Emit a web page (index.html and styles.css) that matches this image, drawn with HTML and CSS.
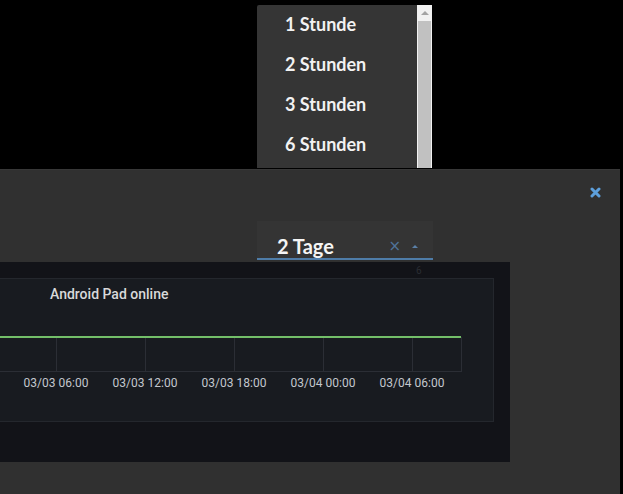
FILE: index.html
```html
<!DOCTYPE html>
<html lang="de">
  <head>
    <meta charset="UTF-8" />
    <meta name="viewport" content="width=device-width, initial-scale=1.0" />
    <title>Android Pad online</title>
    <link rel="stylesheet" href="styles.css">
  </head>
  <body>
    <ul class="dropdown">
      <li>1 Stunde</li>
      <li>2 Stunden</li>
      <li>3 Stunden</li>
      <li>6 Stunden</li>
      <li class="scrollbar"><i class="arrow"></i><i class="thumb"></i></li>
    </ul>

    <section class="dialog">
      <header>
        <button class="close" title="Schließen">
          <svg width="11" height="11" viewBox="0 0 11 11">
            <path d="M2 2 L9 9 M9 2 L2 9" stroke="#5d9fdb" stroke-width="3" stroke-linecap="round" />
          </svg>
        </button>
      </header>

      <div class="select">
        <span class="value">2 Tage</span>
        <span class="clear">×</span>
        <span class="caret"></span>
      </div>

      <div class="charts">
        <div class="hint">6</div>
        <div class="panel">
          <h3>Android Pad online</h3>
          <svg class="plot" width="494" height="110" viewBox="0 0 494 110">
            <g stroke="#2b2e35" stroke-width="1">
              <line x1="0" y1="26.5" x2="461.5" y2="26.5" />
              <line x1="0" y1="60.5" x2="461.5" y2="60.5" />
              <line x1="56.5" y1="26" x2="56.5" y2="61" />
              <line x1="145.5" y1="26" x2="145.5" y2="61" />
              <line x1="234.5" y1="26" x2="234.5" y2="61" />
              <line x1="323.5" y1="26" x2="323.5" y2="61" />
              <line x1="412.5" y1="26" x2="412.5" y2="61" />
              <line x1="461.5" y1="26" x2="461.5" y2="61" />
            </g>
            <line x1="0" y1="26" x2="461" y2="26" stroke="#73bf69" stroke-width="2" />
            <g class="ticks" text-anchor="middle">
              <text x="56" y="76">03/03 06:00</text>
              <text x="145" y="76">03/03 12:00</text>
              <text x="234" y="76">03/03 18:00</text>
              <text x="323" y="76">03/04 00:00</text>
              <text x="412" y="76">03/04 06:00</text>
            </g>
          </svg>
        </div>
      </div>
    </section>
  </body>
</html>
```

FILE: styles.css
```css
body {
  margin: 0;
  background: #000;
  font-family: Lato, "Open Sans", sans-serif;
  height: 100vh;
  overflow: hidden;
}

.dropdown {
  position: absolute;
  top: 5px;
  left: 257px;
  width: 175px;
  height: 163px;
  margin: 0;
  padding: 0;
  list-style: none;
  background: #353535;
  border-radius: 2px 0 0 0;
  overflow: hidden;

  li {
    height: 40px;
    line-height: 38px;
    padding-left: 28px;
    color: #f2f2f2;
    font-size: 18px;
    font-weight: 700;
  }

  .scrollbar {
    position: absolute;
    top: 0;
    right: 0;
    width: 15px;
    height: 100%;
    padding: 0;
    background: #f1f1f1;
    display: flex;
    flex-direction: column;
    align-items: center;
  }

  .arrow {
    width: 0;
    height: 0;
    margin: 6px 0 6px;
    border: 4px solid transparent;
    border-top: none;
    border-bottom: 4px solid #a3a3a3;
  }

  .thumb {
    width: 13px;
    flex: 1;
    background: #c1c1c1;
  }
}

.dialog {
  position: relative;
  margin-top: 169px;
  width: 620px;
  height: 325px;
  background: #303030;
  border-top: 1px solid #383838;
  box-sizing: border-box;

  header {
    display: flex;
    justify-content: flex-end;
    padding: 17px 19px 0 0;
    height: 11px;
  }

  .close {
    display: flex;
    padding: 0;
    border: none;
    background: none;
    cursor: pointer;
  }
}

.select {
  display: flex;
  align-items: center;
  box-sizing: border-box;
  width: 176px;
  height: 39px;
  margin: 23px 0 0 257px;
  padding: 13px 15px 0 20px;
  background: #343434;
  border-bottom: 2px solid #4e7ca8;

  .value {
    flex: 1;
    height: 24px;
    line-height: 24px;
    color: #f5f5f5;
    font-size: 20px;
    font-weight: 700;
  }

  .clear {
    color: #4f7399;
    font-family: "DejaVu Sans", sans-serif;
    font-size: 15px;
    line-height: 24px;
    margin-right: 11px;
  }

  .caret {
    width: 0;
    height: 0;
    border: 3px solid transparent;
    border-top: none;
    border-bottom: 3px solid #5a80a8;
  }
}

.charts {
  width: 510px;
  height: 200px;
  margin-top: 2px;
  background: #121318;
}

.hint {
  height: 16px;
  padding-left: 416px;
  font-family: Roboto, sans-serif;
  font-size: 10px;
  line-height: 18px;
  color: #2a2d33;
}

.panel {
  box-sizing: border-box;
  width: 494px;
  height: 144px;
  background: #181b20;
  border: 1px solid #24272d;
  border-left: none;

  h3 {
    margin: 0;
    height: 32px;
    line-height: 30px;
    padding-left: 50px;
    color: #d8d9da;
    font-family: Roboto, sans-serif;
    font-size: 14px;
    font-weight: 500;
  }

  .plot {
    display: block;
  }

  .ticks {
    fill: #c3c7ce;
    font-family: Roboto, sans-serif;
    font-size: 12px;
  }
}
```
